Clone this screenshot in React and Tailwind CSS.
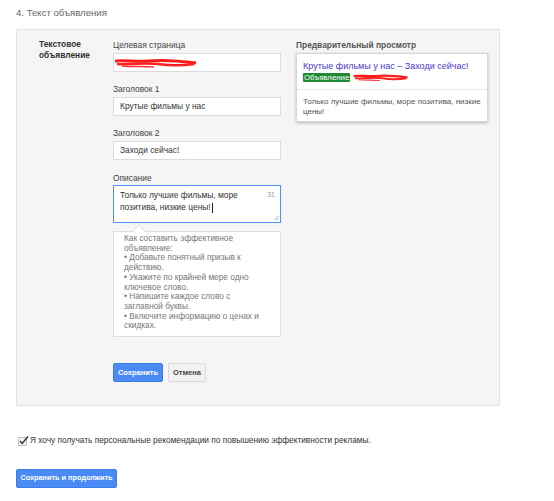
import React from 'react'

const font = { fontFamily: '"Liberation Sans", Arial, sans-serif' }

const Scribble = ({ width = 84, height = 12 }) => (
  <svg width={width} height={height} viewBox="0 0 84 12" preserveAspectRatio="none">
    <path d="M1 4 C 12 3, 22 5, 34 4 S 58 3, 82 6" stroke="#ff1a1a" strokeWidth="3" fill="none" />
    <path d="M3 7 C 18 8, 30 5, 44 7 S 66 9, 80 7" stroke="#ff2020" strokeWidth="2.5" fill="none" />
    <path d="M8 9 C 20 10, 30 9, 40 10" stroke="#ff3030" strokeWidth="1.5" fill="none" />
  </svg>
)

const Field = ({ label, children, className = '' }) => (
  <div className={className}>
    <div className="h-[12px] text-[8.4px] leading-[12px] text-[#444]">{label}</div>
    {children}
  </div>
)

const TextInput = ({ children }) => (
  <div className="mt-[2px] flex h-[19px] items-center border border-[#dcdcdc] bg-white pl-[6px] text-[8.4px] text-[#333]">
    {children}
  </div>
)

const tips = [
  'Как составить эффективное',
  'объявление:',
  '• Добавьте понятный призыв к',
  'действию.',
  '• Укажите по крайней мере одно',
  'ключевое слово.',
  '• Напишите каждое слово с',
  'заглавной буквы.',
  '• Включите информацию о ценах и',
  'скидках.',
]

export default function App() {
  return (
    <div className="min-h-[501px] w-[554px] bg-white" style={font}>
      <div className="px-[16px] pt-[7px]">
        {/* Section title */}
        <div className="h-[12px] text-[9.6px] leading-[12px] text-[#666]">4. Текст объявления</div>

        {/* Panel */}
        <div className="mt-[10px] flex h-[377px] w-[484px] border border-[#e4e4e4] bg-[#f5f5f5] pl-[22px] pt-[9px]">
          <div className="w-[74px] text-[8.4px] font-bold leading-[11px] text-[#333]">
            Текстовое
            <br />
            объявление
          </div>

          {/* Form column */}
          <div className="w-[168px]">
            <Field label="Целевая страница">
              <div className="mt-[2px] flex h-[19px] items-center border border-[#dcdcdc] bg-white">
                <Scribble />
              </div>
            </Field>
            <Field label="Заголовок 1" className="mt-[11px]">
              <TextInput>Крутые фильмы у нас</TextInput>
            </Field>
            <Field label="Заголовок 2" className="mt-[11px]">
              <TextInput>Заходи сейчас!</TextInput>
            </Field>
            <Field label="Описание" className="mt-[12px]">
              <div className="relative mt-[1px] h-[38px] border border-[#4d90fe] bg-white pl-[6px] pt-[3px] text-[8.4px] leading-[12px] text-[#333]">
                <div>Только лучшие фильмы, море</div>
                <div>
                  позитива, низкие цены!
                  <span className="ml-[1px] inline-block h-[10px] w-[1px] bg-[#222] align-middle" />
                </div>
                <span className="absolute right-[5px] top-[3px] text-[7px] text-[#999]">31</span>
                <svg className="absolute bottom-[1px] right-[1px]" width="6" height="6" viewBox="0 0 6 6">
                  <path d="M1 5.5 L5.5 1 M3.5 5.5 L5.5 3.5" stroke="#999" strokeWidth="0.8" />
                </svg>
              </div>
            </Field>

            {/* Tip */}
            <div className="relative mt-[8px] h-[106px] border border-[#dedede] bg-white pl-[10px] pt-[2px] text-[8.3px] leading-[9.7px] text-[#777]">
              <svg className="absolute left-[18px] top-[-8px]" width="14" height="9" viewBox="0 0 14 9">
                <path d="M0 8.5 L7 1 L14 8.5" fill="white" stroke="#dedede" strokeWidth="1" />
                <path d="M1 9 L13 9" stroke="white" strokeWidth="1.5" />
              </svg>
              {tips.map((t) => (
                <div key={t} className="whitespace-nowrap">{t}</div>
              ))}
            </div>

            {/* Buttons */}
            <div className="mt-[26px] flex gap-[5px]">
              <button className="h-[19px] w-[50px] whitespace-nowrap rounded-[2px] border border-[#3b7ce6] bg-[#4a8af4] text-[7.5px] font-bold text-white">
                Сохранить
              </button>
              <button className="h-[19px] w-[38px] whitespace-nowrap rounded-[2px] border border-[#dadada] bg-[#f1f1f1] text-[7.5px] font-bold text-[#444]">
                Отмена
              </button>
            </div>
          </div>

          {/* Preview column */}
          <div className="ml-[15px] w-[192px]">
            <div className="h-[12px] whitespace-nowrap text-[8.4px] font-bold leading-[12px] text-[#555]">Предварительный просмотр</div>
            <div className="mt-[2px] h-[69px] border border-[#d6d6d6] bg-white shadow-[0_1px_3px_rgba(0,0,0,0.25)]">
              <div className="h-[35px] px-[6px] pt-[6px]">
                <div className="whitespace-nowrap text-[9px] leading-[12px] text-[#4a3bc9]">Крутые фильмы у нас – Заходи сейчас!</div>
                <div className="mt-[1px] flex items-center">
                  <span className="rounded-[1px] bg-[#1e8b34] px-[1px] text-[7.8px] leading-[9px] text-white">Объявление</span>
                  <span className="ml-[3px]">
                    <Scribble width={56} height={9} />
                  </span>
                </div>
              </div>
              <div className="border-t border-[#e8e8e8] px-[6px] pt-[7px] text-[8px] leading-[9.5px] text-[#555]">
                <div className="whitespace-nowrap">Только лучшие фильмы, море позитива, низкие</div>
                <div>цены!</div>
              </div>
            </div>
          </div>
        </div>

        {/* Checkbox */}
        <div className="mt-[28px] flex items-center">
          <svg width="11" height="11" viewBox="0 0 11 11" className="ml-[2px]">
            <rect x="0.5" y="2.5" width="8" height="8" fill="#f3f3f3" stroke="#c4c4c4" />
            <path d="M2 6 L4.2 8.5 L10 1.5" fill="none" stroke="#333" strokeWidth="1.4" />
          </svg>
          <span className="ml-[1px] whitespace-nowrap text-[8.3px] text-[#333]">
            Я хочу получать персональные рекомендации по повышению эффективности рекламы.
          </span>
        </div>

        {/* Continue button */}
        <button className="mt-[23px] h-[19px] w-[101px] whitespace-nowrap rounded-[2px] border border-[#3b7ce6] bg-[#4a8af4] text-[7.3px] font-bold text-white">
          Сохранить и продолжить
        </button>
      </div>
    </div>
  )
}
